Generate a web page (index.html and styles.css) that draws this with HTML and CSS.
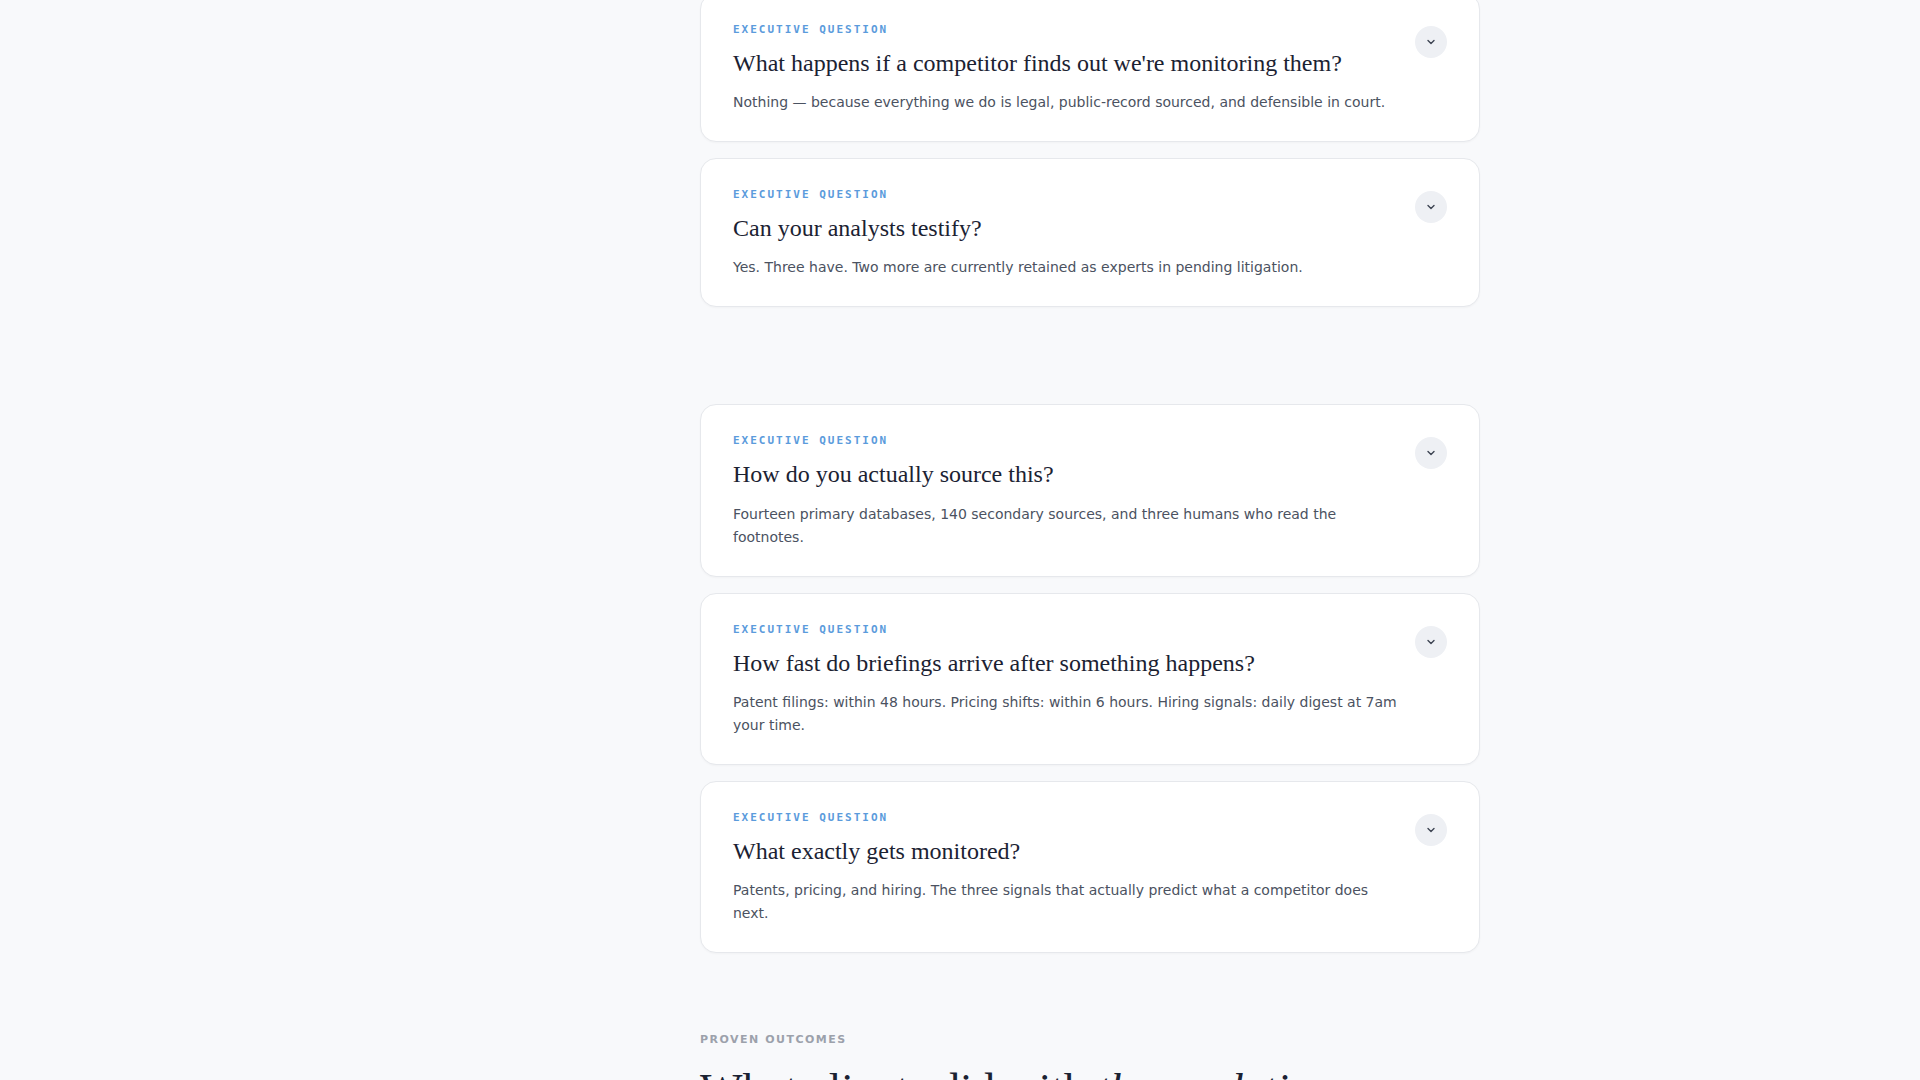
FILE: index.html
```html
<!DOCTYPE html>
<html>
  <head>
    <meta charset="UTF-8" />
    <title>Executive FAQ</title>
    <link rel="stylesheet" href="styles.css">
  </head>
  <body>
    <div class="layout">
      <aside class="sidebar"></aside>

      <main class="main">
        <div class="faq-list">
          <div class="faq-card">
            <div class="faq-body">
              <div class="faq-label">Executive Question</div>
              <h3 class="faq-question">What happens if a competitor finds out we're monitoring them?</h3>
              <p class="faq-answer">Nothing — because everything we do is legal, public-record sourced, and defensible in court.</p>
            </div>
            <button class="faq-toggle" aria-label="Toggle answer">
              <svg viewBox="0 0 12 12" width="12" height="12"><path d="M3 4.5 L6 7.5 L9 4.5" /></svg>
            </button>
          </div>

          <div class="faq-card">
            <div class="faq-body">
              <div class="faq-label">Executive Question</div>
              <h3 class="faq-question">Can your analysts testify?</h3>
              <p class="faq-answer">Yes. Three have. Two more are currently retained as experts in pending litigation.</p>
            </div>
            <button class="faq-toggle" aria-label="Toggle answer">
              <svg viewBox="0 0 12 12" width="12" height="12"><path d="M3 4.5 L6 7.5 L9 4.5" /></svg>
            </button>
          </div>
        </div>

        <div class="faq-list">
          <div class="faq-card">
            <div class="faq-body">
              <div class="faq-label">Executive Question</div>
              <h3 class="faq-question">How do you actually source this?</h3>
              <p class="faq-answer">Fourteen primary databases, 140 secondary sources, and three humans who read the footnotes.</p>
            </div>
            <button class="faq-toggle" aria-label="Toggle answer">
              <svg viewBox="0 0 12 12" width="12" height="12"><path d="M3 4.5 L6 7.5 L9 4.5" /></svg>
            </button>
          </div>

          <div class="faq-card">
            <div class="faq-body">
              <div class="faq-label">Executive Question</div>
              <h3 class="faq-question">How fast do briefings arrive after something happens?</h3>
              <p class="faq-answer">Patent filings: within 48 hours. Pricing shifts: within 6 hours. Hiring signals: daily digest at 7am your time.</p>
            </div>
            <button class="faq-toggle" aria-label="Toggle answer">
              <svg viewBox="0 0 12 12" width="12" height="12"><path d="M3 4.5 L6 7.5 L9 4.5" /></svg>
            </button>
          </div>

          <div class="faq-card">
            <div class="faq-body">
              <div class="faq-label">Executive Question</div>
              <h3 class="faq-question">What exactly gets monitored?</h3>
              <p class="faq-answer">Patents, pricing, and hiring. The three signals that actually predict what a competitor does next.</p>
            </div>
            <button class="faq-toggle" aria-label="Toggle answer">
              <svg viewBox="0 0 12 12" width="12" height="12"><path d="M3 4.5 L6 7.5 L9 4.5" /></svg>
            </button>
          </div>
        </div>

        <section class="outcomes">
          <div class="section-eyebrow">Proven Outcomes</div>
          <h2 class="section-title">What clients did with <em>the analytics</em></h2>
        </section>
      </main>
    </div>
  </body>
</html>
```

FILE: styles.css
```css
:root {
  --bg-color: #f8f9fb;
  --card-bg: #ffffff;
  --border-color: #e6e8ec;
  --text-color: #1b2232;
  --muted-color: #4b5261;
  --label-color: #5b9bdc;
  --eyebrow-color: #9ca1ab;
  --toggle-bg: #eef0f4;
}

html,
body {
  margin: 0;
  padding: 0;
  background-color: var(--bg-color);
  height: 100%;
  overflow: hidden;
}

body {
  font-family: "DejaVu Sans", sans-serif;
  color: var(--text-color);
}

.layout {
  display: flex;
  min-height: 100%;
}

.sidebar {
  flex: 0 0 260px;
}

.main {
  flex: 1;
  max-width: 780px;
  margin: -7px auto 0;
}

.faq-list {
  display: flex;
  flex-direction: column;
  gap: 16px;
}

.faq-list + .faq-list {
  margin-top: 97px;
}

.faq-card {
  display: flex;
  align-items: flex-start;
  gap: 16px;
  padding: 28px 32px 27px;
  background-color: var(--card-bg);
  border: 1px solid var(--border-color);
  border-radius: 16px;
  box-shadow: 0 1px 2px rgba(16, 24, 40, 0.03);
}

.faq-body {
  flex: 1;
  min-width: 0;
}

.faq-label {
  font-family: "DejaVu Sans Mono", monospace;
  font-size: 11px;
  font-weight: 700;
  line-height: 16px;
  letter-spacing: 2px;
  text-transform: uppercase;
  color: var(--label-color);
}

.faq-question {
  margin: 10px 0 0;
  font-family: "Liberation Serif", serif;
  font-size: 24px;
  font-weight: 400;
  line-height: 1.3;
  color: var(--text-color);
}

.faq-answer {
  margin: 12px 0 0;
  font-size: 14px;
  line-height: 23px;
  color: var(--muted-color);
}

.faq-toggle {
  flex: 0 0 32px;
  width: 32px;
  height: 32px;
  margin-top: 4px;
  padding: 0;
  border: none;
  border-radius: 50%;
  background-color: var(--toggle-bg);
  display: flex;
  align-items: center;
  justify-content: center;
  cursor: pointer;
}

.faq-toggle svg path {
  fill: none;
  stroke: #3d4452;
  stroke-width: 1.4;
  stroke-linecap: round;
  stroke-linejoin: round;
}

.outcomes {
  margin-top: 80px;
}

.section-eyebrow {
  font-size: 11px;
  font-weight: 700;
  letter-spacing: 1.5px;
  text-transform: uppercase;
  color: var(--eyebrow-color);
}

.section-title {
  margin: 18px 0 0;
  font-family: "Liberation Serif", serif;
  font-size: 45px;
  font-weight: 400;
  line-height: 1.15;
  color: var(--text-color);
}

.section-title em {
  font-style: italic;
}
```
